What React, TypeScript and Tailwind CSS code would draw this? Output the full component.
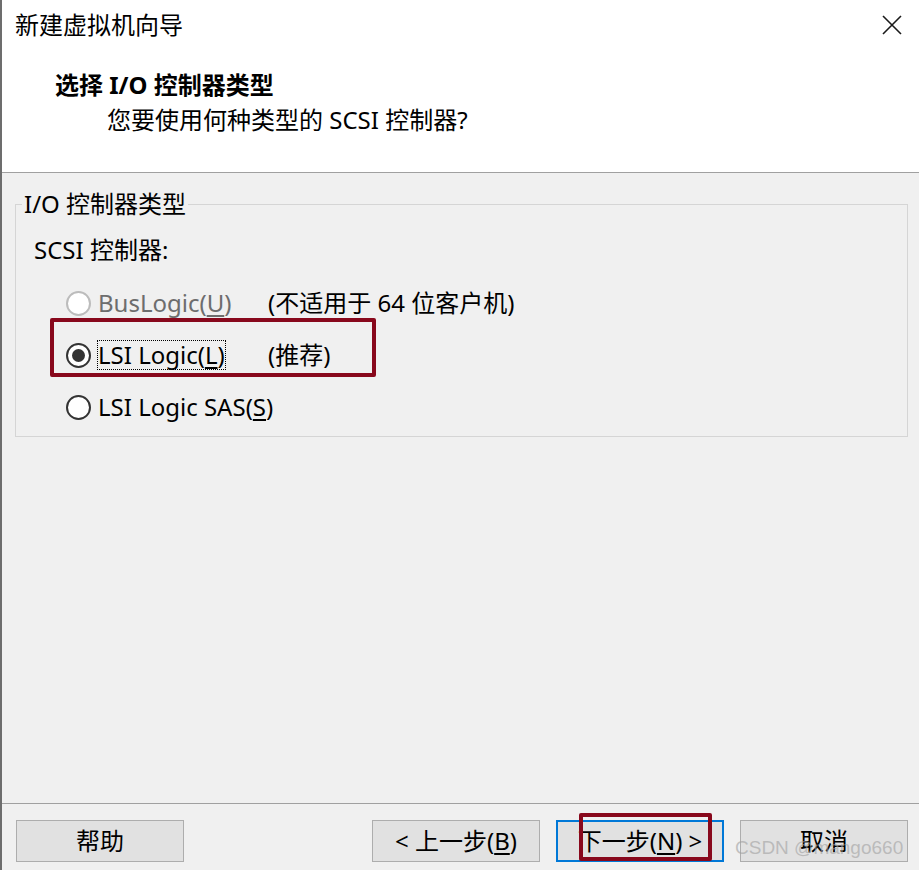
import React from "react";

type Option = {
  label: string;
  key: string;
  note?: string;
  checked?: boolean;
  disabled?: boolean;
  focused?: boolean;
};

const options: Option[] = [
  { label: "BusLogic", key: "U", note: "(不适用于 64 位客户机)", disabled: true },
  { label: "LSI Logic", key: "L", note: "(推荐)", checked: true, focused: true },
  { label: "LSI Logic SAS", key: "S" },
];

function Radio({ checked, disabled }: { checked?: boolean; disabled?: boolean }) {
  return (
    <div
      className={`w-[25px] h-[25px] shrink-0 rounded-full border-2 bg-white flex items-center justify-center ${
        disabled ? "border-[#bcbcbc]" : "border-[#333333]"
      }`}
    >
      {checked && <div className="w-[13px] h-[13px] rounded-full bg-[#333333]" />}
    </div>
  );
}

function Button({ children, primary }: { children: React.ReactNode; primary?: boolean }) {
  return (
    <div
      className={`w-[168px] h-[42px] flex items-center justify-center bg-[#e1e1e1] text-[24px] leading-none text-black ${
        primary ? "border-2 border-[#0078d7]" : "border border-[#adadad]"
      }`}
    >
      {children}
    </div>
  );
}

export default function App() {
  return (
    <div className="relative w-[919px] h-[870px] flex flex-col bg-[#f0f0f0] border-l-2 border-[#6d6d6d] font-['Noto_Sans','Noto_Sans_CJK_SC',sans-serif] text-black overflow-hidden">
      {/* header */}
      <div className="h-[173px] shrink-0 bg-white border-b border-[#a0a0a0] flex flex-col">
        <div className="flex items-center justify-between pl-[13px] pr-[17px] pt-[7px]">
          <span className="text-[24px] leading-[36px]">新建虚拟机向导</span>
          <svg width="20" height="20" viewBox="0 0 20 20" className="text-[#1a1a1a]">
            <path d="M1 1 L19 19 M19 1 L1 19" stroke="currentColor" strokeWidth="1.6" fill="none" />
          </svg>
        </div>
        <div className="pl-[53px] mt-[24px] text-[24px] leading-[36px] font-bold">选择 I/O 控制器类型</div>
        <div className="pl-[105px] text-[24px] leading-[34px]">您要使用何种类型的 SCSI 控制器?</div>
      </div>

      {/* body */}
      <div className="flex-1 pt-[16px]">
        <fieldset className="ml-[13px] mr-[11px] border border-[#d5d5d5] pb-[3px]">
          <legend className="ml-[6px] px-[2px] text-[24px] leading-[30px]">I/O 控制器类型</legend>
          <div className="pl-[18px] mt-[14px] text-[24px] leading-[34px]">SCSI 控制器:</div>
          <div className="mt-[10px] flex flex-col">
            {options.map((o) => (
              <div key={o.key} className="h-[52px] flex items-center pl-[50px]">
                <Radio checked={o.checked} disabled={o.disabled} />
                <div className="w-[177px] pl-[6px] shrink-0">
                  <span
                    className={`inline-block text-[24px] leading-[28px] whitespace-nowrap border border-dotted ${
                      o.focused ? "border-black" : "border-transparent"
                    } ${o.disabled ? "text-[#6d6d6d]" : "text-black"}`}
                  >
                    {o.label}(<span className="underline underline-offset-[3px]">{o.key}</span>)
                  </span>
                </div>
                {o.note && <span className="text-[24px] leading-[28px] whitespace-nowrap">{o.note}</span>}
              </div>
            ))}
          </div>
        </fieldset>
      </div>

      {/* footer */}
      <div className="h-[67px] shrink-0 border-t border-[#a0a0a0] flex items-start justify-between pl-[14px] pr-[11px] pt-[16px]">
        <Button>帮助</Button>
        <div className="flex gap-[16px]">
          <Button>
            &lt; 上一步(<span className="underline underline-offset-[3px]">B</span>)
          </Button>
          <Button primary>
            下一步(<span className="underline underline-offset-[3px]">N</span>) &gt;
          </Button>
          <Button>取消</Button>
        </div>
      </div>

      {/* annotation boxes */}
      <div className="absolute left-[48px] top-[318px] w-[326px] h-[59px] border-4 border-[#88081c] rounded-[2px]" />
      <div className="absolute left-[577px] top-[813px] w-[133px] h-[48px] border-4 border-[#88081c] rounded-[2px]" />

      {/* watermark */}
      <div className="absolute left-[733px] top-[835px] text-[19px] leading-[26px] font-['Liberation_Sans',sans-serif] text-[#a0a0a0]/60 whitespace-nowrap">
        CSDN @mango660
      </div>
    </div>
  );
}
